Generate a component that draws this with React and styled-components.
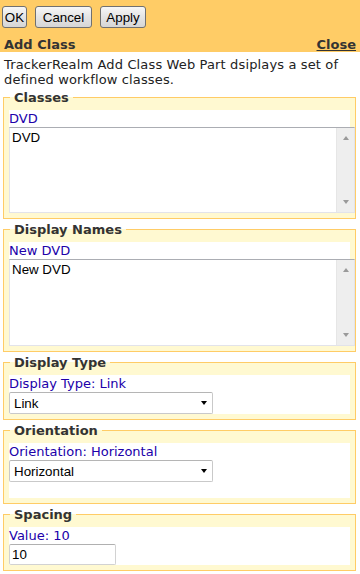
import React from 'react';
import styled, { createGlobalStyle } from 'styled-components';

const Colors = {
  orange: '#ffcc66',
  cream: '#fff9d1',
  label: '#2000aa',
  text: '#333333',
};

const GlobalStyle = createGlobalStyle`
  html, body {
    margin: 0;
    padding: 0;
    background: #ffffff;
  }
  body {
    font-family: "DejaVu Sans", Verdana, sans-serif;
  }
`;

/* HEADER block */
const Header = styled.div`
  background-color: ${Colors.orange};
  padding: 6px 4px 0 2px;
  height: 46px;
`;

const ButtonRow = styled.div`
  display: flex;
  column-gap: 8px;
  height: 22px;
`;

const Button = styled.button`
  width: ${props => props.w}px;
  height: 22px;
  padding: 0;
  font-family: "Liberation Sans", Arial, sans-serif;
  font-size: 13.33px;
  color: #000;
  background: linear-gradient(#f7f7f7, #e4e4e4 50%, #d6d6d6);
  border: 1px solid #707070;
  border-radius: 3px;
`;

const TitleRow = styled.div`
  display: flex;
  justify-content: space-between;
  align-items: center;
  margin-top: 8px;
  padding-left: 2px;
  height: 16px;
  font-size: 13px;
  font-weight: 700;
  color: ${Colors.text};
`;

const CloseLink = styled.a`
  color: ${Colors.text};
  text-decoration: underline;
  cursor: pointer;
`;

const Description = styled.div`
  padding: 5px 4px 0;
  font-size: 13px;
  line-height: 15px;
  letter-spacing: 0.14px;
  color: #222;
`;

/* FORM blocks */
const Body = styled.div`
  display: flex;
  flex-direction: column;
  row-gap: 3px;
  padding: 3px 4px 3px 3px;
`;

const Group = styled.fieldset`
  margin: 0;
  padding: 5px 5px 5px;
  min-width: 0;
  border: 1px solid ${Colors.orange};
  background-color: ${Colors.cream};
`;

const Legend = styled.legend`
  margin-left: 1px;
  padding: 0 4px;
  font-size: 13px;
  line-height: 15px;
  font-weight: 700;
  color: ${Colors.text};
`;

const Panel = styled.div`
  background-color: #fff;
  padding-bottom: ${props => props.extra || 0}px;
`;

const Label = styled.div`
  height: 17px;
  line-height: 17px;
  font-size: 13px;
  color: ${Colors.label};
`;

const ListBox = styled.div`
  display: flex;
  width: calc(100% + 5px);
  height: ${props => props.h}px;
  box-sizing: border-box;
  border: 1px solid #e2e3ea;
  border-top-color: #abadb3;
  background: #fff;
`;

const ListText = styled.div`
  flex: 1;
  padding: 2px 2px;
  font-family: "Liberation Sans", Arial, sans-serif;
  font-size: 13.33px;
  line-height: 16px;
  color: #000;
`;

const ScrollTrack = styled.div`
  width: 17px;
  display: flex;
  flex-direction: column;
  justify-content: space-between;
  align-items: center;
  padding: 8px 0;
  background: #eeeeee;
  border-left: 1px solid #e6e6e6;
`;

const Arrow = styled.span`
  width: 0;
  height: 0;
  border-left: 3.5px solid transparent;
  border-right: 3.5px solid transparent;
  ${props => props.up
    ? 'border-bottom: 4px solid #9a9a9a;'
    : 'border-top: 4px solid #9a9a9a;'}
`;

const Select = styled.div`
  display: flex;
  justify-content: space-between;
  align-items: center;
  width: 204px;
  height: 22px;
  box-sizing: border-box;
  padding: 0 5px 0 4px;
  border: 1px solid #c9c9c9;
  border-top-color: #b5b5b5;
  border-radius: 2px;
  background: #fff;
  font-family: "Liberation Sans", Arial, sans-serif;
  font-size: 13.33px;
  color: #000;
`;

const SelectArrow = styled.span`
  width: 0;
  height: 0;
  border-left: 3.5px solid transparent;
  border-right: 3.5px solid transparent;
  border-top: 4px solid #000;
`;

const Input = styled.input`
  display: block;
  width: 107px;
  height: 21px;
  box-sizing: border-box;
  margin: 0;
  padding: 0 2px;
  border: 1px solid #d2d2d2;
  border-top-color: #b0b0b0;
  border-radius: 2px;
  font-family: "Liberation Sans", Arial, sans-serif;
  font-size: 13.33px;
  color: #000;
  outline: none;
`;

const Scrollbar = () => (
  <ScrollTrack>
    <Arrow up />
    <Arrow />
  </ScrollTrack>
);

const App = () => {
  return (
    <>
      <GlobalStyle />
      <Header>
        <ButtonRow>
          <Button w={25}>OK</Button>
          <Button w={57}>Cancel</Button>
          <Button w={46}>Apply</Button>
        </ButtonRow>
        <TitleRow>
          <span>Add Class</span>
          <CloseLink>Close</CloseLink>
        </TitleRow>
      </Header>
      <Description>
        TrackerRealm Add Class Web Part dsiplays a set of defined workflow classes.
      </Description>
      <Body>
        <Group>
          <Legend>Classes</Legend>
          <Panel>
            <Label>DVD</Label>
            <ListBox h={86}>
              <ListText>DVD</ListText>
              <Scrollbar />
            </ListBox>
          </Panel>
        </Group>
        <Group>
          <Legend>Display Names</Legend>
          <Panel>
            <Label>New DVD</Label>
            <ListBox h={87}>
              <ListText>New DVD</ListText>
              <Scrollbar />
            </ListBox>
          </Panel>
        </Group>
        <Group>
          <Legend>Display Type</Legend>
          <Panel>
            <Label>Display Type: Link</Label>
            <Select>
              <span>Link</span>
              <SelectArrow />
            </Select>
          </Panel>
        </Group>
        <Group>
          <Legend>Orientation</Legend>
          <Panel extra={16}>
            <Label>Orientation: Horizontal</Label>
            <Select>
              <span>Horizontal</span>
              <SelectArrow />
            </Select>
          </Panel>
        </Group>
        <Group>
          <Legend>Spacing</Legend>
          <Panel>
            <Label>Value: 10</Label>
            <Input defaultValue="10" />
          </Panel>
        </Group>
      </Body>
    </>
  );
};

export default App;
